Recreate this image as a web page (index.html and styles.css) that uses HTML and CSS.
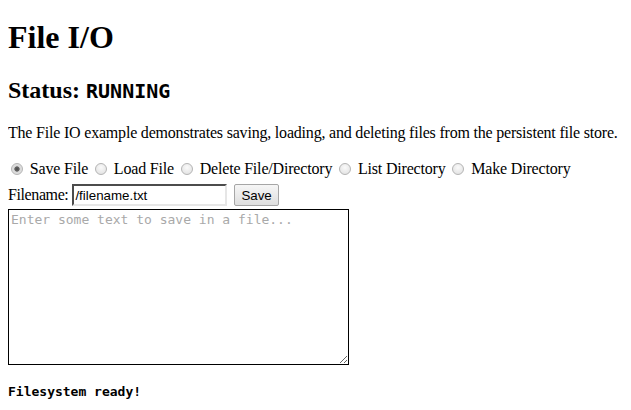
FILE: index.html
```html
<!DOCTYPE html>
<html>
<head>
<meta charset="utf-8">
<link rel="stylesheet" href="styles.css">
</head>
<body class="page">
<h1 class="title">File I/O</h1>
<h2 class="status">Status: <code class="status-code">RUNNING</code></h2>
<p class="intro">The File IO example demonstrates saving, loading, and deleting files from the persistent file store.</p>
<div class="modes"><label class="mode"><input class="radio" type="radio" name="mode" checked> Save File</label> <label class="mode"><input class="radio" type="radio" name="mode"> Load File</label> <label class="mode"><input class="radio" type="radio" name="mode"> Delete File/Directory</label> <label class="mode"><input class="radio" type="radio" name="mode"> List Directory</label> <label class="mode"><input class="radio" type="radio" name="mode"> Make Directory</label></div>
<div class="file-row"><span class="file-label">Filename:</span> <input class="filename" type="text" value="/filename.txt"> <button class="save-btn">Save</button></div>
<textarea class="content" placeholder="Enter some text to save in a file..."></textarea>
<pre class="log"><b>Filesystem ready!</b></pre>
</body>
</html>
```
FILE: styles.css
```css
.page {
  margin: 8px;
  font-family: "Liberation Serif", serif;
  font-size: 16px;
  color: #000;
  background: #fff;
}
.title {
  font-size: 32px;
  margin: 11px 0 21px;
}
.status {
  font-size: 24px;
  margin: 20px 0;
}
.status-code {
  font-family: "DejaVu Sans Mono", monospace;
  font-size: 20px;
}
.intro {
  margin: 16px 0;
  letter-spacing: -0.2px;
  white-space: nowrap;
}
.modes {
  margin-top: 17px;
  line-height: 19px;
  letter-spacing: -0.18px;
}
.radio {
  appearance: none;
  -webkit-appearance: none;
  box-sizing: border-box;
  width: 12px;
  height: 12px;
  margin: 3px 3px 0 3px;
  border: 1px solid #b4b4b4;
  border-radius: 50%;
  background: radial-gradient(circle at 50% 35%, #fafafa 0%, #dedede 100%);
  vertical-align: -1px;
}
.radio:checked {
  background: radial-gradient(circle, #4a4a4a 0, #666 2.3px, #d8d8d8 3px, #e6e6e6 100%);
}
.file-row {
  margin-top: 6px;
  line-height: 20px;
}
.file-label {
  letter-spacing: -0.4px;
}
.filename {
  font-family: "Liberation Sans", sans-serif;
  font-size: 13.33px;
  width: 149px;
  height: 16px;
  padding: 1px 1px;
  border: 2px inset #e6e6e6;
  border-top-color: #a0a0a0;
  border-left-color: #a0a0a0;
  margin: 0;
}
.save-btn {
  font-family: "Liberation Sans", sans-serif;
  font-size: 13.33px;
  height: 22px;
  padding: 1px 6px;
  border: 1px solid #a6a6a6;
  border-radius: 2px;
  background: linear-gradient(#f6f6f6, #dedede);
  margin-left: 3px;
}
.content {
  display: block;
  box-sizing: border-box;
  width: 341px;
  height: 156px;
  margin: 3px 0 0 0;
  padding: 2px;
  border: 1px solid #000;
  font-family: "DejaVu Sans Mono", monospace;
  font-size: 13px;
  line-height: 15px;
}
.content::placeholder {
  color: #a9a9a9;
}
.log {
  font-family: "DejaVu Sans Mono", monospace;
  font-size: 13px;
  margin: 19px 0 13px;
}
```
